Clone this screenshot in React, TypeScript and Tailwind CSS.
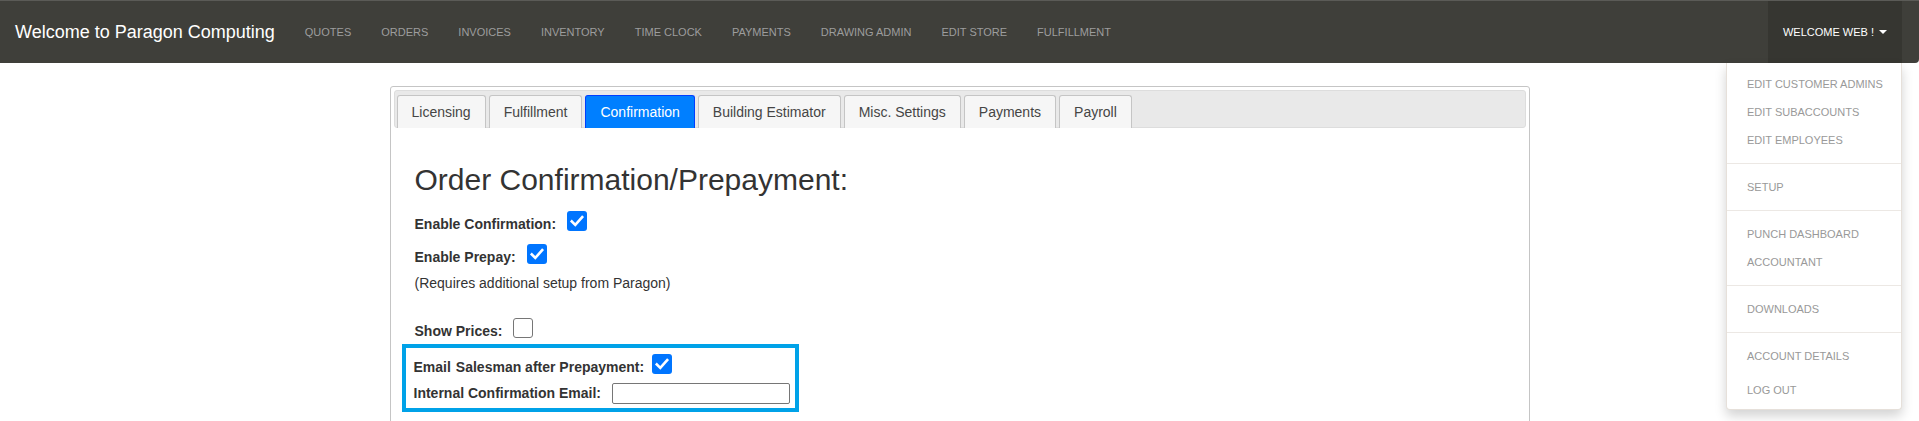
import React from "react";

const navLinks = [
  "QUOTES",
  "ORDERS",
  "INVOICES",
  "INVENTORY",
  "TIME CLOCK",
  "PAYMENTS",
  "DRAWING ADMIN",
  "EDIT STORE",
  "FULFILLMENT",
];

const tabs = [
  "Licensing",
  "Fulfillment",
  "Confirmation",
  "Building Estimator",
  "Misc. Settings",
  "Payments",
  "Payroll",
];

function Checkbox({ checked, ml = "ml-[11px]" }: { checked: boolean; ml?: string }) {
  if (!checked) {
    return (
      <span className={`${ml} mb-[6px] inline-block w-[20px] h-[20px] rounded-[3px] border border-[#767676] bg-white`} />
    );
  }
  return (
    <span className={`${ml} mb-[6px] inline-flex w-[20px] h-[20px] rounded-[3px] bg-[#0075ff] items-center justify-center`}>
      <svg width="20" height="20" viewBox="0 0 20 20">
        <path
          d="M4.8 10.4 L8.3 13.9 L15.2 6.2"
          fill="none"
          stroke="white"
          strokeWidth="2.6"
          strokeLinecap="square"
        />
      </svg>
    </span>
  );
}

function Divider() {
  return <div className="my-[9px] h-px bg-[#ece8e4]" />;
}

function MenuItem({ label, extra = "" }: { label: string; extra?: string }) {
  return (
    <div
      className={`h-[28px] flex items-center px-[20px] text-[11px] text-[#999999] whitespace-nowrap ${extra}`}
    >
      {label}
    </div>
  );
}

export default function App() {
  return (
    <div
      className="min-h-[421px] bg-white text-[#333333]"
      style={{ fontFamily: '"Liberation Sans", Arial, sans-serif' }}
    >
      {/* Navbar */}
      <div className="h-[63px] bg-[#3f3f3a] border-t border-[#5b5b57] flex items-stretch rounded-br-[4px]">
        <div className="flex items-center px-[15px] text-[18px] text-white whitespace-nowrap">
          Welcome to Paragon Computing
        </div>
        <div className="flex items-stretch">
          {navLinks.map((l) => (
            <div
              key={l}
              className="flex items-center px-[15px] text-[11px] text-[#9d9d9d] whitespace-nowrap"
            >
              {l}
            </div>
          ))}
        </div>
        <div className="ml-auto mr-[17px] relative flex items-center px-[15px] bg-[#363631] text-[11px] text-white whitespace-nowrap">
          <span>WELCOME WEB !</span>
          <span className="ml-[5px] inline-block w-0 h-0 border-l-[4px] border-r-[4px] border-t-[4px] border-l-transparent border-r-transparent border-t-white" />
          <div className="absolute top-full right-0 w-[176px] bg-white border border-[#e6e0da] border-t-0 rounded-b-[4px] shadow-[0_6px_12px_rgba(0,0,0,0.175)] pt-[7px] pb-[5px] z-10">
            <MenuItem label="EDIT CUSTOMER ADMINS" />
            <MenuItem label="EDIT SUBACCOUNTS" />
            <MenuItem label="EDIT EMPLOYEES" />
            <Divider />
            <MenuItem label="SETUP" />
            <Divider />
            <MenuItem label="PUNCH DASHBOARD" />
            <MenuItem label="ACCOUNTANT" />
            <Divider />
            <MenuItem label="DOWNLOADS" />
            <Divider />
            <MenuItem label="ACCOUNT DETAILS" />
            <MenuItem label="LOG OUT" extra="mt-[6px]" />
          </div>
        </div>
      </div>

      {/* Main panel */}
      <div className="mx-auto mt-[23px] w-[1140px] border border-[#c5c5c5] rounded-[3px] p-[3px] pb-[40px]">
        <div className="bg-[#e9e9e9] border border-[#dddddd] rounded-[3px] px-[2px] pt-[4px] flex gap-[3px]">
          {tabs.map((t) => {
            const active = t === "Confirmation";
            return (
              <div
                key={t}
                className={
                  active
                    ? "h-[33px] -mb-px px-[14px] flex items-center border border-b-0 border-[#003eff] bg-[#007fff] text-white text-[14px] rounded-t-[3px]"
                    : "h-[33px] -mb-px px-[14px] flex items-center border border-b-0 border-[#c5c5c5] bg-[#f6f6f6] text-[#454545] text-[14px] rounded-t-[3px]"
                }
              >
                {t}
              </div>
            );
          })}
        </div>

        <div className="pt-[35px] pl-[21px]">
          <div className="text-[30px] leading-[33px] h-[33px] text-[#333333]">
            Order Confirmation/Prepayment:
          </div>

          <div className="mt-[16px] h-[24px] flex items-center text-[14px] font-bold">
            <span>Enable Confirmation:</span>
            <Checkbox checked />
          </div>
          <div className="mt-[9px] h-[24px] flex items-center text-[14px] font-bold">
            <span>Enable Prepay:</span>
            <Checkbox checked />
          </div>
          <div className="mt-[4px] text-[14px] leading-[20px]">
            (Requires additional setup from Paragon)
          </div>
          <div className="mt-[26px] h-[24px] flex items-center text-[14px] font-bold">
            <span>Show Prices:</span>
            <Checkbox checked={false} />
          </div>

          <div className="mt-[1px] -ml-[13px] w-[397px] border-4 border-[#00a2e8] pt-[7px] pb-[3px] pl-[8px]">
            <div className="h-[24px] flex items-center text-[14px] font-bold">
              <span>
                Email<span className="ml-[5px]">Salesman after Prepayment:</span>
              </span>
              <Checkbox checked ml="ml-[8px]" />
            </div>
            <div className="mt-[2px] h-[24px] flex items-center text-[14px] font-bold">
              <span>Internal Confirmation Email:</span>
              <span className="ml-[11px] inline-block w-[178px] h-[21px] border border-[#767676] rounded-[2px] bg-white" />
            </div>
          </div>
        </div>
      </div>
    </div>
  );
}
